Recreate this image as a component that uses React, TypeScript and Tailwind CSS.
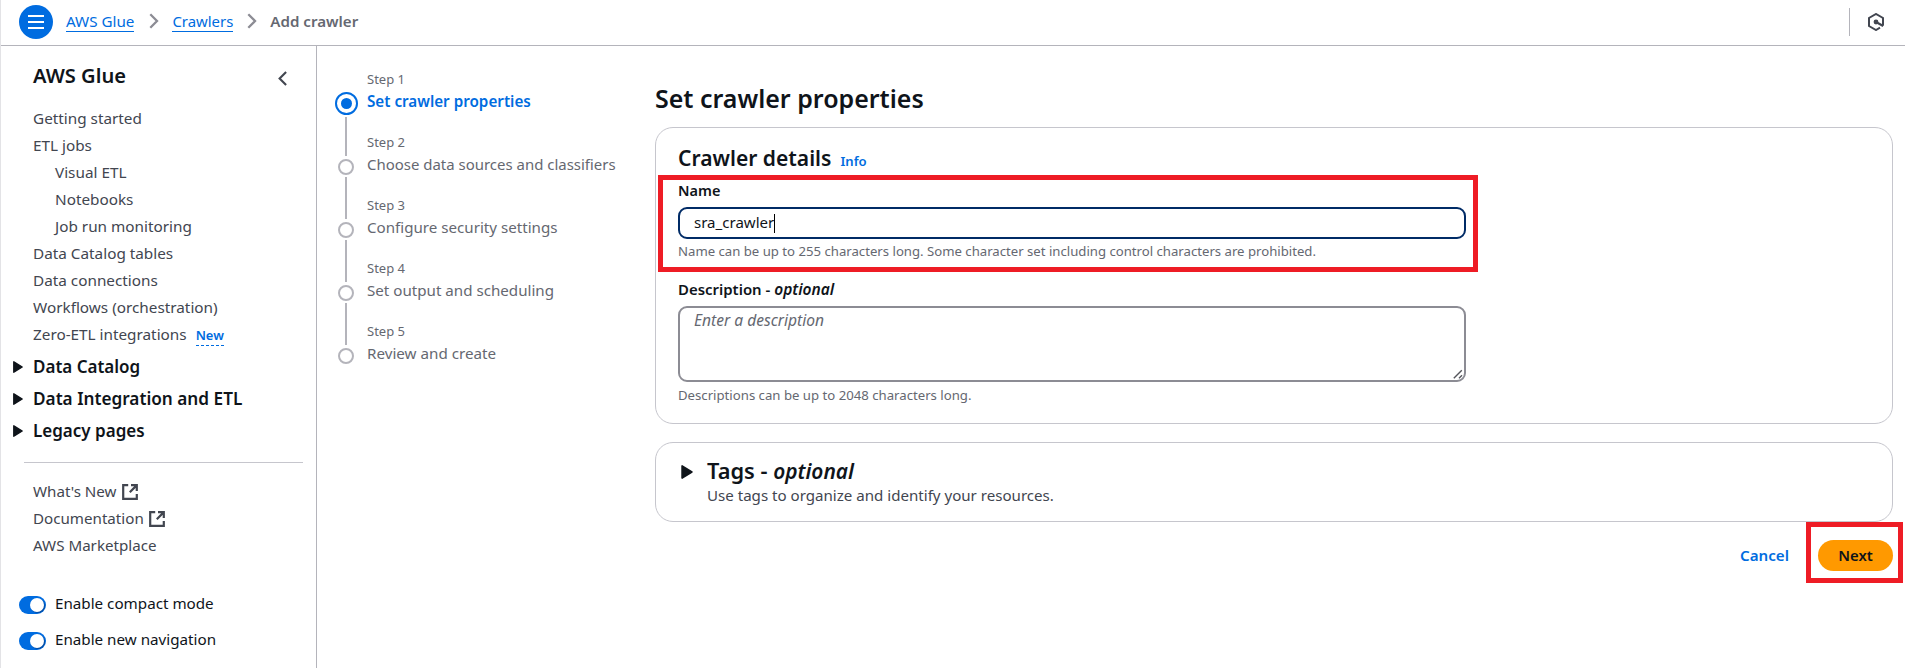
import type { ReactNode } from "react";

const navLinks: { label: string; nested?: boolean; isNew?: boolean }[] = [
  { label: "Getting started" },
  { label: "ETL jobs" },
  { label: "Visual ETL", nested: true },
  { label: "Notebooks", nested: true },
  { label: "Job run monitoring", nested: true },
  { label: "Data Catalog tables" },
  { label: "Data connections" },
  { label: "Workflows (orchestration)" },
  { label: "Zero-ETL integrations", isNew: true },
];

const sections: { label: string; size: string }[] = [
  { label: "Data Catalog", size: "text-[17px]" },
  { label: "Data Integration and ETL", size: "text-[17.2px]" },
  { label: "Legacy pages", size: "text-[17px]" },
];

const resources = [
  { label: "What's New", external: true },
  { label: "Documentation", external: true },
  { label: "AWS Marketplace", external: false },
];

const toggles = ["Enable compact mode", "Enable new navigation"];

const steps: { label: string; size: string }[] = [
  { label: "Set crawler properties", size: "text-[15.22px]" },
  { label: "Choose data sources and classifiers", size: "text-[14.96px]" },
  { label: "Configure security settings", size: "text-[15.15px]" },
  { label: "Set output and scheduling", size: "text-[15.15px]" },
  { label: "Review and create", size: "text-[15.2px]" },
];

function Caret({ className }: { className: string }) {
  return (
    <svg viewBox="0 0 10 12" className={className}>
      <path d="M0.8 0.8v10.4L9.2 6z" fill="#0f141a" stroke="#0f141a" strokeWidth="1.4" strokeLinejoin="round" />
    </svg>
  );
}

function Separator() {
  return (
    <svg viewBox="0 0 10 16" className="mb-px h-4 w-[10px] shrink-0" fill="none" stroke="#8c8c94" strokeWidth="2.3">
      <path d="M1.3 1.3 8 8l-6.7 6.7" />
    </svg>
  );
}

function ExternalIcon() {
  return (
    <svg viewBox="0 0 16 16" className="ml-[5px] h-4 w-4" fill="none" stroke="#424650" strokeWidth="2.2">
      <path d="M6.2 1.2H1.2v13.6h13.6V10" />
      <path d="M9 1.2h5.8V7M14.6 1.4 7.8 8.2" />
    </svg>
  );
}

function Crumb({ children }: { children: ReactNode }) {
  return <a className="border-b border-[#006ce0] leading-5 text-[#006ce0]">{children}</a>;
}

function Header() {
  return (
    <header className="flex h-[46px] shrink-0 items-start border-b border-[#b4b4bb] pl-[18px]">
      <button className="mt-[5px] flex h-[34px] w-[34px] flex-col items-center justify-center gap-1 rounded-full bg-[#006ce0]">
        <span className="h-[2px] w-4 bg-white" />
        <span className="h-[2px] w-4 bg-white" />
        <span className="h-[2px] w-4 bg-white" />
      </button>
      <nav className="ml-[13px] mt-[11px] flex items-center text-[15.2px]">
        <Crumb>AWS Glue</Crumb>
        <span className="ml-[15px] mr-[13px] flex"><Separator /></span>
        <span className="flex text-[14.9px]"><Crumb>Crawlers</Crumb></span>
        <span className="ml-[14px] mr-[13px] flex"><Separator /></span>
        <span className="mb-px text-[15.13px] font-semibold leading-5 text-[#656871]">Add crawler</span>
      </nav>
      <div className="ml-auto mr-[21px] mt-[8px] flex h-7 items-center border-l border-[#b4b4bb] pl-[18px]">
        <svg viewBox="0 0 16 18" className="h-[18px] w-4" fill="none" stroke="#424650" strokeWidth="2">
          <path d="M12 14.7 8 17 1 13V5l7-4 7 4v7.6" strokeLinejoin="miter" />
          <path d="M8 9l7.2 4" strokeWidth="2.2" />
          <circle cx="8" cy="9" r="2.4" fill="#424650" stroke="none" />
        </svg>
      </div>
    </header>
  );
}

function Sidebar() {
  return (
    <aside className="w-[316px] shrink-0 border-r border-[#b4b4bb] pt-[14px] text-[15.3px] text-[#424650]">
      <div className="flex h-8 items-center pl-[32px] pr-[29px]">
        <h2 className="text-[20.1px] font-semibold leading-8 text-[#0f141a]">AWS Glue</h2>
        <svg viewBox="0 0 9 15" className="ml-auto mt-[4px] h-[15px] w-[9px]" fill="none" stroke="#424650" strokeWidth="2.1">
          <path d="M8.1 .9 1.6 7.5l6.5 6.6" />
        </svg>
      </div>
      <ul className="mt-[13px]">
        {navLinks.map((n) => (
          <li key={n.label} className={n.nested ? "flex h-[27px] pl-[54px] leading-[27px]" : "flex h-[27px] pl-[32px] leading-[27px]"}>
            {n.label}
            {n.isNew && (
              <span className="ml-[9px] mt-[5px] h-5 border-b border-dashed border-[#006ce0] text-[12.9px] font-semibold leading-[19px] text-[#006ce0]">
                New
              </span>
            )}
          </li>
        ))}
      </ul>
      <ul className="mt-[3px]">
        {sections.map((s) => (
          <li key={s.label} className={`flex h-8 items-center pl-3 font-semibold leading-8 text-[#0f141a] ${s.size}`}>
            <Caret className="mr-[10px] h-3 w-[10px]" />
            {s.label}
          </li>
        ))}
      </ul>
      <hr className="ml-[23px] mr-[13px] mt-[15px] border-[#c6c6cd]" />
      <ul className="mt-[15px]">
        {resources.map((r) => (
          <li key={r.label} className="flex h-[27px] items-center pl-[32px] text-[15.15px] leading-[27px]">
            {r.label}
            {r.external && <ExternalIcon />}
          </li>
        ))}
      </ul>
      <div className="mt-[26px] text-[15.2px] text-[#0f141a]">
        {toggles.map((t) => (
          <label key={t} className="flex h-9 items-center pl-[18px] leading-9">
            <span className="mr-[9px] mt-[3px] flex h-[18px] w-[27px] items-center justify-end rounded-full bg-[#006ce0] pr-[2px]">
              <span className="h-[14px] w-[14px] rounded-full bg-white shadow-[1px_1px_1px_rgba(0,20,60,0.4)]" />
            </span>
            {t}
          </label>
        ))}
      </div>
    </aside>
  );
}

function Steps() {
  return (
    <ol className="w-[320px] shrink-0 pl-[17px] pt-5">
      {steps.map((s, i) => {
        const active = i === 0;
        const last = i === steps.length - 1;
        return (
          <li key={s.label} className="flex h-[63px]">
            <div className="flex w-6 flex-col items-center">
              <span className={active ? "h-6" : "h-[27px] w-[2px] bg-[#b4b4bb]"} />
              {active ? (
                <span className="flex h-[27px] items-center">
                  <span className="mb-px flex h-[23px] w-[23px] items-center justify-center rounded-full border-2 border-[#006ce0]">
                    <span className="h-[11px] w-[11px] rounded-full bg-[#006ce0]" />
                  </span>
                </span>
              ) : (
                <span className="flex h-[21px] items-center">
                  <span className="h-4 w-4 rounded-full border-2 border-[#b4b4bb]" />
                </span>
              )}
              {!last && <span className="w-[2px] flex-1 bg-[#b4b4bb]" />}
            </div>
            <div className="ml-[9px] whitespace-nowrap pt-[3px] text-[#656871]">
              <div className="text-[13px] leading-5">Step {i + 1}</div>
              <div className={`mt-px leading-[23px] ${s.size} ${active ? "font-semibold text-[#006ce0]" : ""}`}>{s.label}</div>
            </div>
          </li>
        );
      })}
    </ol>
  );
}

function CrawlerDetails() {
  return (
    <section className="relative mt-[11px] h-[297px] rounded-[18px] border border-[#c6c6cd] pl-[22px] pt-4">
      <div className="flex items-baseline">
        <h2 className="text-[21.05px] font-semibold leading-7 text-[#0f141a]">Crawler details</h2>
        <a className="ml-[9px] text-[13.1px] font-semibold leading-5 text-[#006ce0]">Info</a>
      </div>
      <label className="mt-[8px] block text-[14.5px] font-semibold leading-5 text-[#0f141a]">Name</label>
      <div className="mt-[7px] flex h-8 w-[788px] items-center rounded-[9px] border-2 border-[#002b66] pl-[14px] text-[15.05px] text-[#0f141a]">
        <span className="-mt-[2px] leading-[26px]">sra_crawler</span>
        <span className="h-[19px] w-px bg-black" />
      </div>
      <p className="mt-[2px] text-[13.16px] leading-5 text-[#656871]">
        Name can be up to 255 characters long. Some character set including control characters are prohibited.
      </p>
      <label className="mt-[18px] block text-[14.95px] font-semibold leading-5 text-[#0f141a]">
        Description - <i className="text-[15.5px]">optional</i>
      </label>
      <div className="mt-[7px] flex h-[76px] w-[788px] rounded-[9px] border-2 border-[#8c8c94] pl-[14px]">
        <span className="text-[15.6px] italic leading-6 text-[#656871]">Enter a description</span>
        <svg viewBox="0 0 10 10" className="mb-px ml-auto mr-px h-[10px] w-[10px] self-end" fill="none" stroke="#55565c" strokeWidth="1.4">
          <path d="M.8 9.2l8-8M6 9.2l3-3" />
        </svg>
      </div>
      <p className="mt-[3px] text-[13.18px] leading-5 text-[#656871]">Descriptions can be up to 2048 characters long.</p>
      <div className="pointer-events-none absolute left-[2px] top-[47px] h-[97px] w-[820px] border-[5px] border-[#ee1c25]" />
    </section>
  );
}

export default function App() {
  return (
    <div className="flex h-[668px] w-[1905px] flex-col overflow-hidden border-l border-[#e3e3e6] bg-white font-['Noto_Sans',sans-serif]">
      <Header />
      <div className="flex min-h-0 flex-1">
        <Sidebar />
        <Steps />
        <main className="ml-[18px] w-[1238px] pt-[34px]">
          <h1 className="text-[24.98px] font-semibold leading-9 text-[#0f141a]">Set crawler properties</h1>
          <CrawlerDetails />
          <section className="mt-[18px] flex h-20 rounded-[18px] border border-[#c6c6cd] pl-[25px] pt-[15px]">
            <Caret className="mt-[7px] h-[14px] w-[12px]" />
            <div className="ml-[14px]">
              <h2 className="text-[21.8px] font-semibold leading-[26px] text-[#0f141a]">
                Tags - <i className="text-[20.9px]">optional</i>
              </h2>
              <p className="text-[15.1px] leading-[22px] text-[#424650]">Use tags to organize and identify your resources.</p>
            </div>
          </section>
          <div className="mt-[18px] flex h-[31px] items-center justify-end">
            <button className="mr-[29px] text-[15.17px] font-semibold leading-[31px] text-[#006ce0]">Cancel</button>
            <div className="relative">
              <button className="block h-[31px] w-[75px] rounded-full bg-[#ff9900] text-[14.85px] font-semibold leading-[31px] text-[#0f141a]">Next</button>
              <div className="pointer-events-none absolute -left-3 -top-[18px] h-[61px] w-[97px] border-[5px] border-[#ee1c25]" />
            </div>
          </div>
        </main>
      </div>
    </div>
  );
}
